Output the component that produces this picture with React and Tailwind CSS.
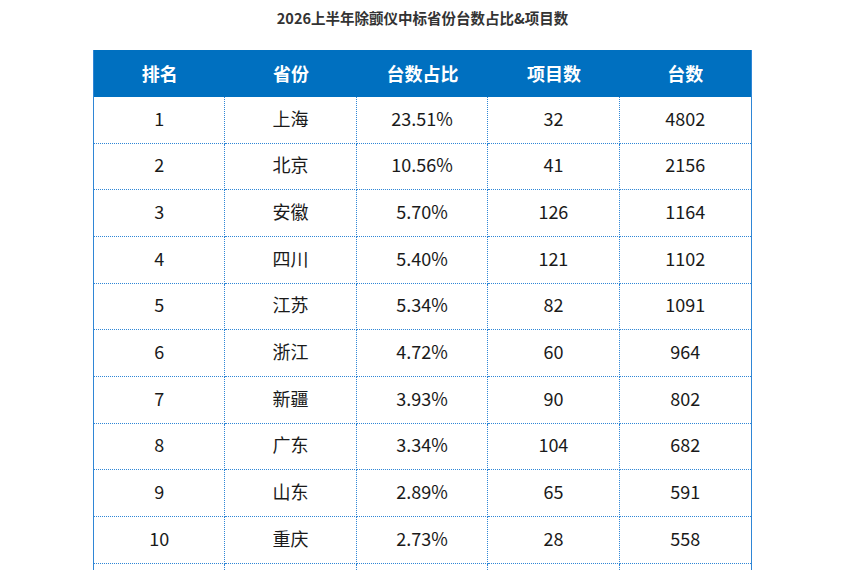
import React from "react";

const rows = [
  ["1", "上海", "23.51%", "32", "4802"],
  ["2", "北京", "10.56%", "41", "2156"],
  ["3", "安徽", "5.70%", "126", "1164"],
  ["4", "四川", "5.40%", "121", "1102"],
  ["5", "江苏", "5.34%", "82", "1091"],
  ["6", "浙江", "4.72%", "60", "964"],
  ["7", "新疆", "3.93%", "90", "802"],
  ["8", "广东", "3.34%", "104", "682"],
  ["9", "山东", "2.89%", "65", "591"],
  ["10", "重庆", "2.73%", "28", "558"],
  ["", "", "", "", ""],
];

const headers = ["排名", "省份", "台数占比", "项目数", "台数"];

export default function App() {
  return (
    <div
      className="w-[850px] h-[570px] overflow-hidden bg-white"
      style={{ fontFamily: '"Noto Sans CJK SC", "Noto Sans", sans-serif' }}
    >
      <div className="ml-[93px] w-[659px] pt-[8px]">
        <div className="h-[20px] leading-[20px] text-center text-[14.5px] font-bold text-[#333333]">
          2026上半年除颤仪中标省份台数占比&amp;项目数
        </div>
        <div className="mt-[22px] border-x border-[#2f86d6]">
          <div className="grid grid-cols-5 h-[47px] bg-[#0070c0]">
            {headers.map((h) => (
              <div
                key={h}
                className="flex items-center justify-center pb-[1px] text-white text-[18px] font-bold"
              >
                {h}
              </div>
            ))}
          </div>
          {rows.map((r, ri) => (
            <div key={ri} className="grid grid-cols-5">
              {r.map((c, i) => (
                <div
                  key={i}
                  className={
                    "box-border h-[46.67px] flex items-center justify-center pb-[3px] text-[18px] text-[#1a1a1a] border-b border-dotted border-[#2f86d6] " +
                    (i < 4 ? "border-r" : "")
                  }
                >
                  {c}
                </div>
              ))}
            </div>
          ))}
        </div>
      </div>
    </div>
  );
}
